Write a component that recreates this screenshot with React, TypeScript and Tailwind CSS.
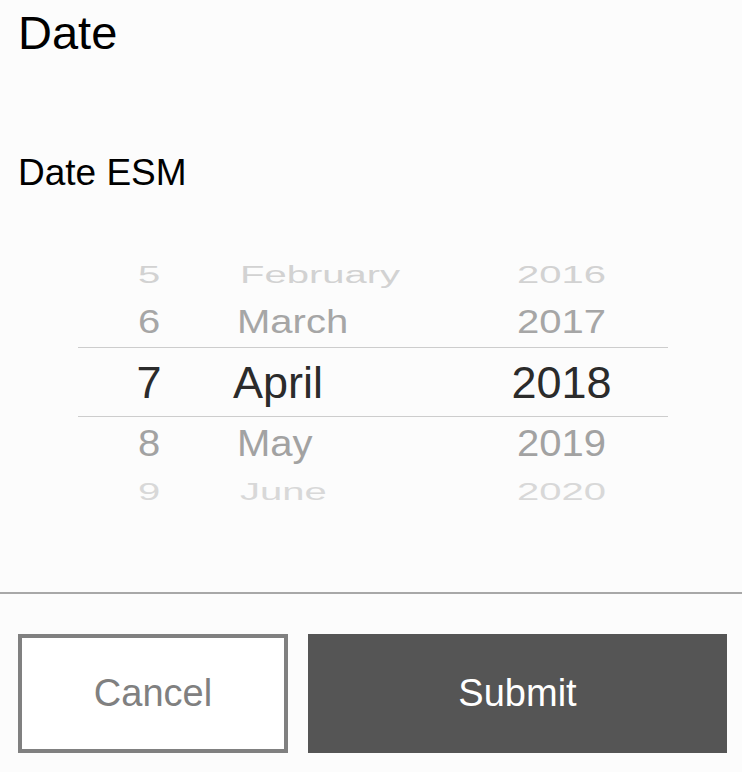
type WheelRow = {
  day: string;
  month: string;
  year: string;
  height: string;
  color: string;
  squash: string;
  monthShift: string;
};

const ROWS: WheelRow[] = [
  { day: "5", month: "February", year: "2016", height: "h-[40px]", color: "text-[#d2d2d2]", squash: "scale-y-[0.58]", monthShift: "pl-[20px]" },
  { day: "6", month: "March", year: "2017", height: "h-[52px]", color: "text-[#a6a6a6]", squash: "scale-y-[0.84]", monthShift: "pl-[17px]" },
  { day: "8", month: "May", year: "2019", height: "h-[51px]", color: "text-[#a2a2a2]", squash: "scale-y-[0.92]", monthShift: "pl-[17px]" },
  { day: "9", month: "June", year: "2020", height: "h-[48px]", color: "text-[#d8d8d8]", squash: "scale-y-[0.58]", monthShift: "pl-[20px]" },
];

function Row({ row }: { row: WheelRow }) {
  return (
    <div className={`flex items-center ${row.height} ${row.color} text-[40px] leading-none`}>
      <span className={`w-[142px] text-center ${row.squash}`}>{row.day}</span>
      <span className={`w-[235px] ${row.monthShift} ${row.squash}`}>{row.month}</span>
      <span className={`flex-1 text-center ${row.squash}`}>{row.year}</span>
    </div>
  );
}

function DatePicker() {
  const [r5, r6, r8, r9] = ROWS;
  return (
    <div className="ml-[78px] mt-[64px] w-[590px]">
      <Row row={r5} />
      <Row row={r6} />
      <div className="box-border flex h-[70px] items-center border-y border-[#cdcdcd] text-[45px] leading-none text-[#2b2b2b]">
        <span className="w-[142px] text-center">7</span>
        <span className="w-[235px] pl-[13px]">April</span>
        <span className="flex-1 text-center">2018</span>
      </div>
      <Row row={r8} />
      <Row row={r9} />
    </div>
  );
}

export default function App() {
  return (
    <div className="min-h-[772px] w-[742px] overflow-hidden bg-[#fcfcfc] font-['Liberation_Sans',Arial,sans-serif] text-black">
      <div className="px-[18px] pt-[10px]">
        <h1 className="text-[47px] leading-[46px]">Date</h1>
        <p className="mt-[98px] text-[37px] leading-[37px]">Date ESM</p>
      </div>

      <DatePicker />

      <div className="mt-[76px] h-[2px] bg-[#a8a8a8]" />

      <div className="mt-[40px] flex gap-[20px] pl-[18px]">
        <button className="box-border flex h-[119px] w-[270px] items-center justify-center border-4 border-[#808080] bg-white text-[38px] text-[#808080]">
          Cancel
        </button>
        <button className="flex h-[119px] w-[419px] items-center justify-center bg-[#555555] text-[38px] text-white">
          Submit
        </button>
      </div>
    </div>
  );
}
